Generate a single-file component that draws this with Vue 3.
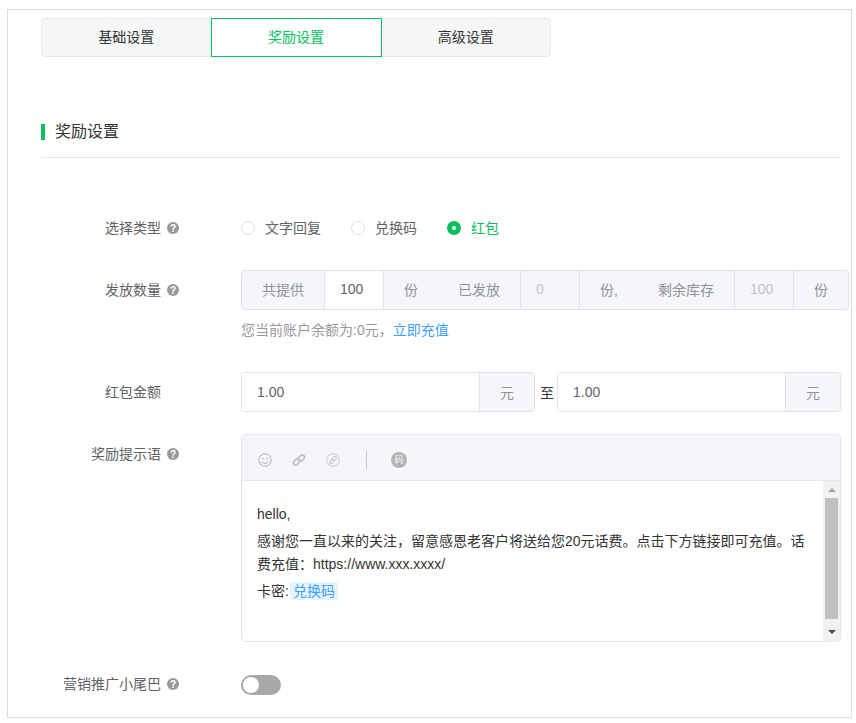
<template>
  <div class="frame">
    <div class="tabs">
      <div
        v-for="(tab, index) in tabs"
        :key="tab"
        class="tab"
        :class="{ active: index === 1 }"
      >
        {{ tab }}
      </div>
    </div>

    <div class="section-title"><span class="bar"></span><span class="title-text">奖励设置</span></div>

    <div class="row row-type">
      <div class="label">选择类型<span class="help">?</span></div>
      <div class="radios">
        <label
          v-for="item in types"
          :key="item"
          class="radio"
          :class="{ checked: item === '红包' }"
        >
          <span class="dot"></span>{{ item }}
        </label>
      </div>
    </div>

    <div class="row row-count">
      <div class="label">发放数量<span class="help">?</span></div>
      <div class="control">
        <div class="count-group">
          <div class="addon addon-first">共提供</div>
          <div class="num">100</div>
          <div class="addon addon-wide"><span>份</span><span>已发放</span></div>
          <div class="num disabled">0</div>
          <div class="addon addon-wide"><span>份,</span><span>剩余库存</span></div>
          <div class="num disabled">100</div>
          <div class="addon addon-last">份</div>
        </div>
        <div class="hint">您当前账户余额为:0元，<a class="link">立即充值</a></div>
      </div>
    </div>

    <div class="row row-amount">
      <div class="label no-help">红包金额</div>
      <div class="amounts">
        <div class="amount amount-from">
          <div class="amount-value">1.00</div>
          <div class="amount-unit">元</div>
        </div>
        <span class="to">至</span>
        <div class="amount amount-to">
          <div class="amount-value">1.00</div>
          <div class="amount-unit">元</div>
        </div>
      </div>
    </div>

    <div class="row row-editor">
      <div class="label">奖励提示语<span class="help">?</span></div>
      <div class="editor">
        <div class="toolbar">
          <svg class="tool" viewBox="0 0 16 16" width="16" height="16">
            <circle cx="8" cy="8" r="6.2" fill="none" stroke="#bdbfc4" stroke-width="1.2" />
            <circle cx="5.8" cy="6.6" r="0.9" fill="#bdbfc4" />
            <circle cx="10.2" cy="6.6" r="0.9" fill="#bdbfc4" />
            <path d="M5 9.6c.8 1.4 1.8 2 3 2s2.200-.6 3-2" fill="none" stroke="#bdbfc4" stroke-width="1.100" />
          </svg>
          <svg class="tool" viewBox="0 0 16 16" width="16" height="16">
            <g fill="none" stroke="#bdbfc4" stroke-width="1.700">
              <rect x="2.200" y="7.800" width="6.500" height="4.400" rx="2.200" transform="rotate(-45 5.450 10)" />
              <rect x="7.300" y="3.800" width="6.500" height="4.400" rx="2.200" transform="rotate(-45 10.550 6)" />
            </g>
          </svg>
          <svg class="tool" viewBox="0 0 16 16" width="16" height="16">
            <circle cx="8" cy="8" r="6.300" fill="none" stroke="#c6c8cc" stroke-width="1" />
            <g fill="none" stroke="#c6c8cc" stroke-width="1">
              <rect x="4.300" y="8" width="4.500" height="3" rx="1.500" transform="rotate(-45 6.550 9.500)" />
              <rect x="7.200" y="5" width="4.500" height="3" rx="1.500" transform="rotate(-45 9.450 6.500)" />
            </g>
          </svg>
          <span class="tool-sep"></span>
          <span class="code-icon">码</span>
        </div>
        <div class="editor-body">
          <div class="content">
            <p>hello,</p>
            <p>感谢您一直以来的关注，留意感恩老客户将送给您20元话费。点击下方链接即可充值。话费充值：https://www.xxx.xxxx/</p>
            <p>卡密:<span class="tag">兑换码</span></p>
          </div>
          <div class="scrollbar">
            <span class="arrow up"></span>
            <span class="thumb"></span>
            <span class="arrow down"></span>
          </div>
        </div>
      </div>
    </div>

    <div class="row row-switch">
      <div class="label">营销推广小尾巴<span class="help">?</span></div>
      <div class="switch"><span class="knob"></span></div>
    </div>
  </div>
</template>

<script setup>
const tabs = ['基础设置', '奖励设置', '高级设置']
const types = ['文字回复', '兑换码', '红包']
</script>

<style>
html,
body {
  margin: 0;
  background: #fff;
}
</style>

<style scoped>
.frame {
  box-sizing: border-box;
  width: 845px;
  height: 709px;
  margin: 9px 0 0 7px;
  padding: 8px 0 0 33px;
  border: 1px solid #dcdcdc;
  font-family: "Liberation Sans", "Noto Sans CJK SC", sans-serif;
  font-size: 14px;
  color: #333;
}

.tabs {
  display: flex;
  box-sizing: border-box;
  width: 510px;
  height: 39px;
  border: 1px solid #e8eaec;
  border-radius: 3px;
  background: #f5f7f7;
}

.tab {
  flex: 1;
  display: flex;
  align-items: center;
  justify-content: center;
  padding-bottom: 4px;
  color: #333;
}

.tab.active {
  box-sizing: border-box;
  flex: 0 0 171px;
  height: 39px;
  margin-top: -1px;
  border: 1px solid #07c160;
  background: #fff;
  color: #07c160;
}

.section-title {
  display: flex;
  align-items: center;
  width: 800px;
  height: 16px;
  margin-top: 67px;
  padding-bottom: 17px;
  border-bottom: 1px solid #e8e8e8;
  font-size: 16px;
  color: #333;
}

.title-text {
  padding-bottom: 4px;
}

.bar {
  width: 4px;
  height: 16px;
  margin-right: 10px;
  background: #07c160;
}

.row {
  display: flex;
}

.label {
  box-sizing: border-box;
  display: flex;
  align-items: center;
  justify-content: flex-end;
  flex: 0 0 138px;
  height: 20px;
  margin-right: 62px;
  padding-bottom: 2px;
  color: #606266;
}

.label.no-help {
  padding-right: 18px;
}

.help {
  display: inline-flex;
  align-items: center;
  justify-content: center;
  width: 12px;
  height: 12px;
  margin: 2px 0 0 6px;
  border-radius: 50%;
  background: #999;
  color: #fff;
  font-size: 10px;
  font-weight: 700;
}

.row-type {
  margin-top: 60px;
}

.radios {
  display: flex;
  height: 20px;
  align-items: center;
}

.radio {
  display: flex;
  align-items: center;
  margin-right: 30px;
  padding-bottom: 2px;
  color: #606266;
}

.dot {
  box-sizing: border-box;
  width: 14px;
  height: 14px;
  margin: 2px 10px 0 0;
  border: 1px solid #dcdfe6;
  border-radius: 50%;
  background: #fff;
}

.radio.checked {
  color: #07c160;
}

.radio.checked .dot {
  border: 5px solid #07c160;
}

.row-count {
  margin-top: 32px;
}

.row-count .label {
  height: 40px;
}

.count-group {
  display: flex;
  box-sizing: border-box;
  width: 608px;
  height: 40px;
  border: 1px solid #dfe1e8;
  border-radius: 4px;
  background: #f5f6fa;
  color: #909399;
}

.addon {
  display: flex;
  align-items: center;
  padding-bottom: 2px;
}

.addon-first {
  padding: 0 20px 2px;
  border-right: 1px solid #dfe1e8;
}

.addon-wide {
  justify-content: space-between;
  gap: 40px;
  padding: 0 20px 2px;
}

.addon-last {
  flex: 1;
  justify-content: center;
}

.num {
  box-sizing: border-box;
  display: flex;
  align-items: center;
  width: 59px;
  padding: 0 0 2px 15px;
  border-left: 1px solid #dfe1e8;
  border-right: 1px solid #dfe1e8;
  background: #fff;
  color: #606266;
}

.addon-first + .num {
  border-left: 0;
}

.num.disabled {
  width: 60px;
  background: #f5f6fa;
  color: #c0c4cc;
}

.hint {
  margin-top: 10px;
  line-height: 20px;
  color: #999;
}

.link {
  color: #409eff;
}

.row-amount {
  margin-top: 32px;
}

.row-amount .label {
  height: 40px;
}

.amounts {
  display: flex;
  align-items: center;
}

.amount {
  display: flex;
  box-sizing: border-box;
  height: 40px;
  border: 1px solid #dfe1e8;
  border-radius: 4px;
  color: #606266;
}

.amount-from {
  width: 294px;
}

.amount-to {
  width: 284px;
}

.amount-value {
  flex: 1;
  display: flex;
  align-items: center;
  padding-left: 15px;
}

.amount-unit {
  display: flex;
  align-items: center;
  justify-content: center;
  width: 54px;
  border-left: 1px solid #dfe1e8;
  border-radius: 0 3px 3px 0;
  background: #f5f6fa;
  color: #909399;
}

.to {
  box-sizing: border-box;
  width: 22px;
  padding-left: 2px;
  text-align: center;
  color: #333;
}

.row-editor {
  margin-top: 22px;
}

.row-editor .label {
  height: 40px;
}

.editor {
  box-sizing: border-box;
  width: 600px;
  height: 208px;
  border: 1px solid #e4e6eb;
  border-radius: 4px;
  overflow: hidden;
}

.toolbar {
  display: flex;
  align-items: center;
  box-sizing: border-box;
  height: 46px;
  padding: 4px 0 0 15px;
  border-bottom: 1px solid #e8e9ee;
  background: #f5f6fa;
}

.tool {
  margin-right: 18px;
}

.tool-sep {
  width: 1px;
  height: 18px;
  margin: 0 24px 0 7px;
  background: #c8c8c8;
}

.code-icon {
  display: flex;
  align-items: center;
  justify-content: center;
  width: 16px;
  height: 16px;
  border-radius: 50%;
  background: #b4b4b4;
  color: #fff;
  font-size: 9px;
}

.editor-body {
  display: flex;
  height: 160px;
}

.content {
  flex: 1;
  padding: 22px 17px 0 15px;
  color: #333;
  line-height: 23px;
}

.content p {
  margin: 0 0 4px;
}

.tag {
  margin-left: 1px;
  padding: 1px 3px;
  border-radius: 2px;
  background: #e6f4ff;
  color: #409eff;
}

.scrollbar {
  display: flex;
  flex-direction: column;
  align-items: center;
  width: 17px;
  background: #f1f1f1;
}

.arrow {
  flex: 0 0 auto;
  width: 0;
  height: 0;
  border-left: 4px solid transparent;
  border-right: 4px solid transparent;
}

.arrow.up {
  margin: 7px 0 6px;
  border-bottom: 4px solid #a3a3a3;
}

.arrow.down {
  margin: 11px 0 0;
  border-top: 4px solid #505050;
}

.thumb {
  flex: 0 0 auto;
  width: 13px;
  height: 121px;
  background: #c1c1c1;
}

.row-switch {
  margin-top: 33px;
  align-items: center;
}

.row-switch .label {
  padding-bottom: 4px;
}

.switch {
  width: 40px;
  height: 20px;
  border-radius: 10px;
  background: #a8a8a8;
}

.knob {
  display: block;
  width: 16px;
  height: 16px;
  margin: 2px;
  border-radius: 50%;
  background: #fff;
}
</style>
